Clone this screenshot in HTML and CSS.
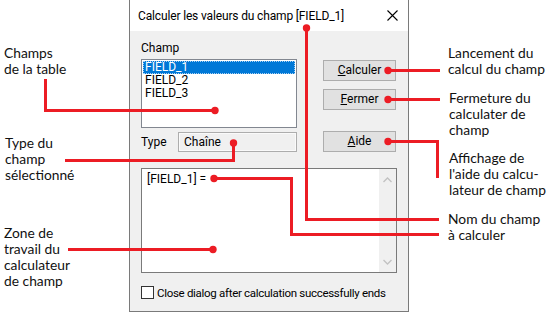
FILE: index.html
```html
<!DOCTYPE html>
<html lang="fr">
<head>
    <meta charset="UTF-8">
    <meta name="viewport" content="width=device-width, initial-scale=1.0">
    <title>Calculer les valeurs du champ</title>
    <link rel="stylesheet" href="styles.css">
</head>
<body>
    <div class="page">
        <div class="dialog">
            <div class="titlebar">
                <span class="title">Calculer les valeurs du champ [FIELD_1]</span>
                <svg class="close" width="11" height="11" viewBox="0 0 11 11">
                    <path d="M0.5 0.5 L10.5 10.5 M10.5 0.5 L0.5 10.5" stroke="#000" stroke-width="1.1" fill="none"/>
                </svg>
            </div>
            <div class="dialog-body">
                <div class="main">
                    <div class="left-col">
                        <div class="label">Champ</div>
                        <div class="listbox">
                            <div class="item selected">FIELD_1</div>
                            <div class="item">FIELD_2</div>
                            <div class="item">FIELD_3</div>
                        </div>
                        <div class="type-row">
                            <span class="type-label">Type</span>
                            <div class="type-box">Chaîne</div>
                        </div>
                    </div>
                    <div class="right-col">
                        <div class="btn"><u>C</u>alculer</div>
                        <div class="btn"><u>F</u>ermer</div>
                        <div class="btn btn-help"><u>A</u>ide</div>
                    </div>
                </div>
                <div class="editor">
                    <div class="expr">[FIELD_1] =</div>
                    <div class="scrollbar">
                        <svg width="9" height="6" viewBox="0 0 9 6"><path d="M0.5 5 L4.5 1 L8.5 5" stroke="#c2c2c2" stroke-width="1.3" fill="none"/></svg>
                        <svg width="9" height="6" viewBox="0 0 9 6"><path d="M0.5 1 L4.5 5 L8.5 1" stroke="#c2c2c2" stroke-width="1.3" fill="none"/></svg>
                    </div>
                </div>
                <div class="check-row">
                    <span class="checkbox"></span>
                    <span class="check-label">Close dialog after calculation successfully ends</span>
                </div>
            </div>
        </div>

        <!-- légendes -->
        <div class="note note-champs">Champs<br>de la table</div>
        <div class="note note-type">Type du<br>champ<br>sélectionné</div>
        <div class="note note-zone">Zone de<br>travail du<br>calculateur<br>de champ</div>
        <div class="note note-calc">Lancement du<br>calcul du champ</div>
        <div class="note note-fermer">Fermeture du<br>calculater de<br>champ</div>
        <div class="note note-aide">Affichage de<br>l'aide du calcu-<br>lateur de champ</div>
        <div class="note note-nom">Nom du champ<br>à calculer</div>

        <svg class="leaders" width="548" height="313" viewBox="0 0 548 313">
            <g stroke="#ec1c24" stroke-width="3" fill="none">
                <path d="M45.5 79 V110.5 H215"/>
                <path d="M65 160.5 H233.5 V143"/>
                <path d="M68 249.5 H213"/>
                <path d="M388 70.5 H440"/>
                <path d="M388 99.5 H440"/>
                <path d="M388 141.5 H437.5 V178"/>
                <path d="M306.5 28 V219.5 H439"/>
                <path d="M214 178.5 H291.5 V234.5 H439"/>
            </g>
            <g fill="#ec1c24">
                <circle cx="215" cy="110.5" r="3.7"/>
                <circle cx="233.5" cy="143" r="3.7"/>
                <circle cx="213" cy="249.5" r="3.7"/>
                <circle cx="388" cy="70.5" r="3.7"/>
                <circle cx="388" cy="99.5" r="3.7"/>
                <circle cx="388" cy="141.5" r="3.7"/>
                <circle cx="306.5" cy="28" r="3.7"/>
                <circle cx="214" cy="178.5" r="3.7"/>
            </g>
        </svg>
    </div>
</body>
</html>
```

FILE: styles.css
```css
body {
    margin: 0;
    padding: 0;
    background-color: #fff;
    font-family: Roboto, Arial, sans-serif;
}

.page {
    position: relative;
    width: 548px;
    height: 313px;
    overflow: hidden;
}

/* fenêtre */
.dialog {
    box-sizing: border-box;
    width: 280px;
    height: 312px;
    margin-left: 129px;
    border: 1px solid #7a7a7a;
    border-top: none;
    background-color: #f0f0f0;
    font-size: 12px;
    color: #000;
}

.titlebar {
    height: 31px;
    background-color: #fff;
    display: flex;
    align-items: center;
    justify-content: space-between;
    padding: 0 10px 0 8px;
}

.title {
    font-size: 12px;
    letter-spacing: -0.15px;
}

.close {
    margin-top: -1px;
}

.dialog-body {
    padding: 0 11px 0 11px;
}

.main {
    display: flex;
    gap: 26px;
}

.left-col {
    width: 156px;
}

.label {
    margin-top: 9px;
    height: 16px;
    line-height: 16px;
    margin-bottom: 3px;
}

.listbox {
    box-sizing: border-box;
    height: 69px;
    border: 1px solid #828790;
    background-color: #fff;
    padding: 1px;
}

.item {
    height: 13px;
    line-height: 13px;
    padding-left: 2px;
}

.item.selected {
    background-color: #0078d7;
    color: #fff;
    outline: 1px dotted #a8d0f2;
    outline-offset: -1px;
}

.type-row {
    display: flex;
    align-items: center;
    margin-top: 4px;
}

.type-label {
    width: 37px;
}

.type-box {
    box-sizing: border-box;
    flex: 1;
    height: 20px;
    line-height: 18px;
    border: 1px solid #adadad;
    box-shadow: inset 0 0 0 1px #fafafa;
    padding-left: 5px;
}

.right-col {
    width: 73px;
    padding-top: 29px;
}

.btn {
    box-sizing: border-box;
    height: 21px;
    line-height: 19px;
    border: 1px solid #adadad;
    background-color: #e1e1e1;
    text-align: center;
    margin-bottom: 8px;
}

.btn-help {
    margin-top: 21px;
    margin-bottom: 0;
}

/* zone d'expression */
.editor {
    box-sizing: border-box;
    display: flex;
    width: 256px;
    height: 105px;
    margin-top: 16px;
    border: 1px solid #7a7a7a;
    background-color: #fff;
}

.expr {
    flex: 1;
    padding: 2px 0 0 5px;
    line-height: 16px;
}

.scrollbar {
    width: 17px;
    background-color: #f0f0f0;
    display: flex;
    flex-direction: column;
    justify-content: space-between;
    align-items: center;
    padding: 8px 0 7px;
}

.check-row {
    display: flex;
    align-items: center;
    gap: 3px;
    margin-top: 13px;
    height: 13px;
    white-space: nowrap;
}

.check-label {
    font-size: 11.5px;
    letter-spacing: -0.3px;
}

.checkbox {
    box-sizing: border-box;
    flex: none;
    width: 13px;
    height: 13px;
    border: 1px solid #333;
    background-color: #fff;
}

/* légendes autour de la fenêtre */
.note {
    position: absolute;
    font-family: Lato, "Open Sans", sans-serif;
    font-size: 13.8px;
    line-height: 16px;
    color: #111;
    white-space: nowrap;
}

.note-champs { left: 4px; top: 45px; }
.note-type { left: 5px; top: 135px; }
.note-zone { left: 4px; top: 225px; }
.note-calc { left: 448px; top: 45px; }
.note-fermer { left: 449px; top: 90px; }
.note-aide { left: 449px; top: 150px; }
.note-nom { left: 448px; top: 211px; }

.leaders {
    position: absolute;
    left: 0;
    top: 0;
    pointer-events: none;
}
```
